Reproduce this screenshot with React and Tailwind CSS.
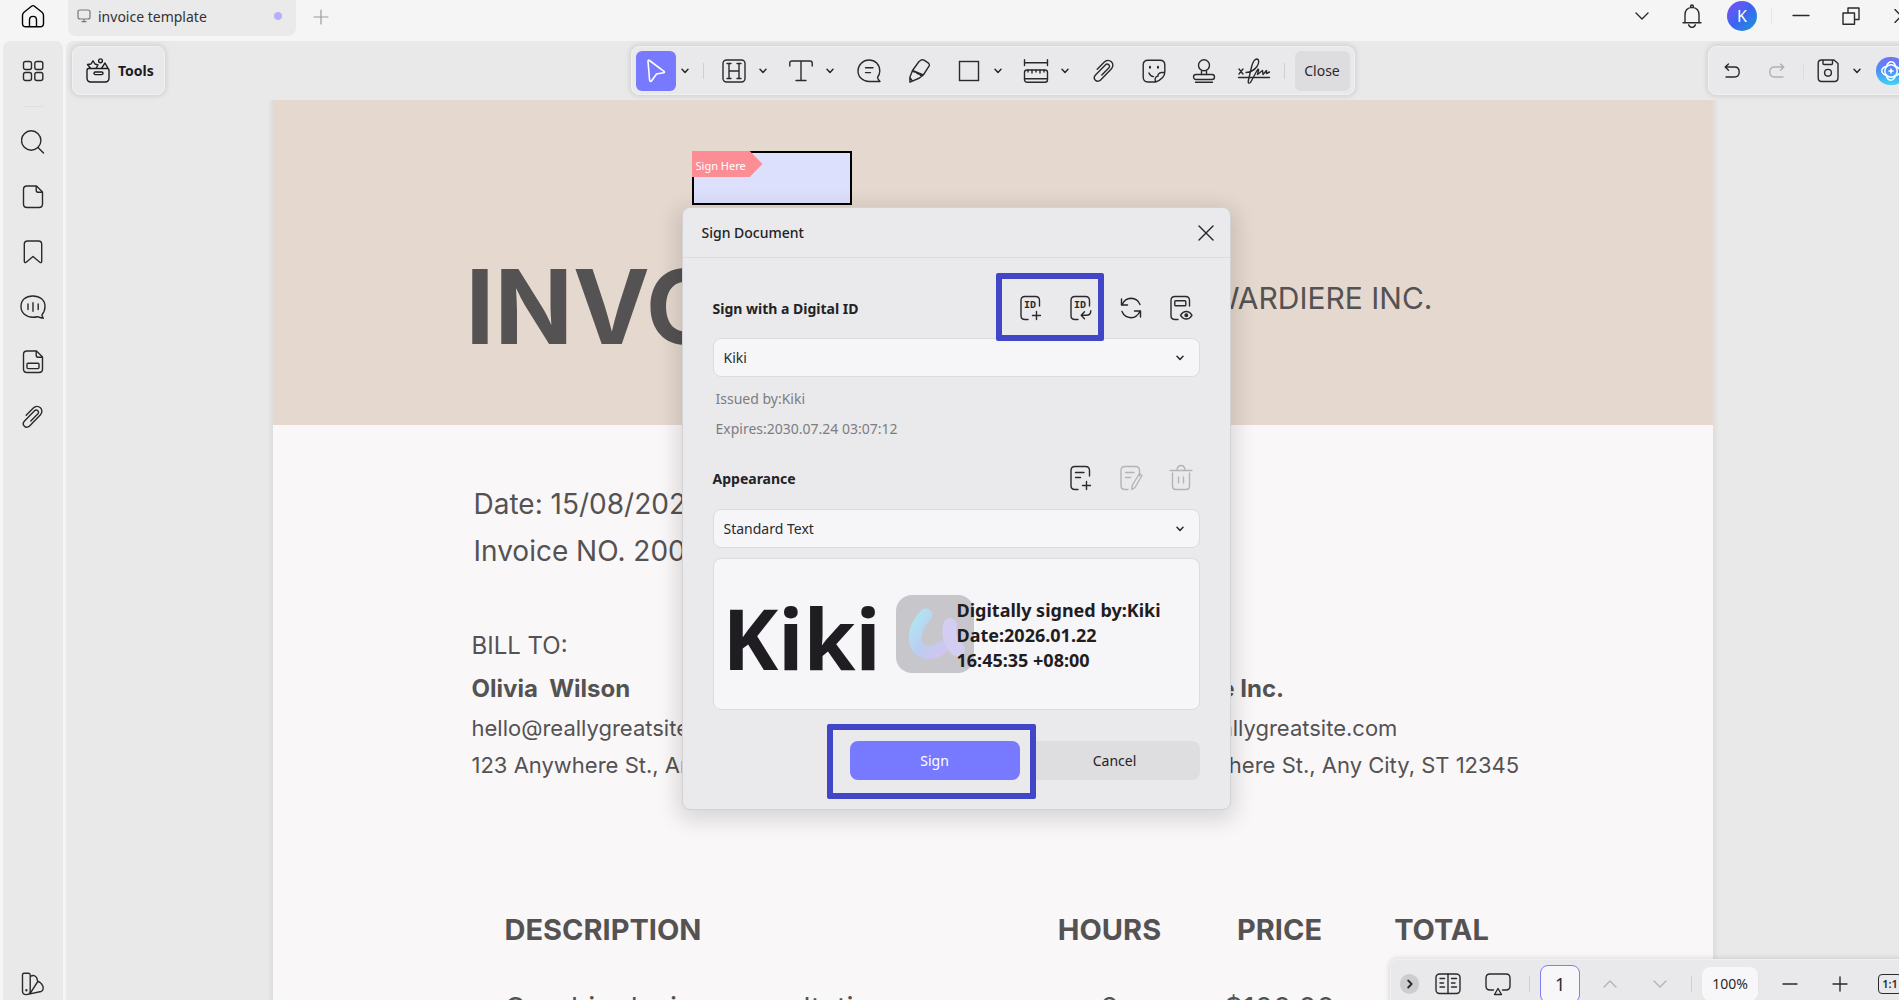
import React from "react";

const ink = "#2a2a2c";

function Icon({ w = 24, h = 24, stroke = 1.4, color = "currentColor", children }) {
  return (
    <svg
      width={w}
      height={h}
      viewBox={`0 0 ${w} ${h}`}
      fill="none"
      stroke={color}
      strokeWidth={stroke}
      strokeLinecap="round"
      strokeLinejoin="round"
      className="shrink-0"
      aria-hidden="true"
    >
      {children}
    </svg>
  );
}

const Chevron = () => (
  <Icon w={8} h={6} stroke={1.5}><path d="M1 1.2 4 4.4 7 1.2" /></Icon>
);

const Paperclip = () => (
  <Icon>
    <path d="M5.2 10.2 12.3 3C14.3 1 17.3 0.9 19.4 2.8 21.3 4.6 21.4 7.7 19.5 9.7L8.6 20.9C7 22.5 4.8 22.6 3.4 21.2 2 19.8 2 17.5 3.5 15.9L13.3 6C14.3 5 15.8 4.9 16.8 5.8 17.7 6.7 17.6 8.1 16.7 9.1L9.8 16" />
  </Icon>
);

const Divider = ({ className }) => <span className={`w-px shrink-0 bg-[#cfcfd2] ${className}`} />;

function Tool({ label, className = "w-[50px]", children }) {
  return (
    <button type="button" aria-label={label} className={`flex h-10 shrink-0 items-center justify-center ${className}`}>
      {children}
    </button>
  );
}

function ToolGroup({ label, children }) {
  return (
    <div className="mr-[5px] ml-1 flex">
      <Tool label={label} className="w-10">{children}</Tool>
      <Tool label={`${label} options`} className="w-[18px]"><Chevron /></Tool>
    </div>
  );
}

function TitleBar() {
  return (
    <header className="flex h-[41px] shrink-0 bg-[#f5f5f6]">
      <button type="button" aria-label="Home" className="flex h-8 w-[66px] items-center justify-center">
        <Icon>
          <path d="M10.5 2.2Q12 1 13.5 2.2L21 8.2Q22.5 9.5 22.5 11.5V19.5Q22.5 22.8 19 22.8H5Q1.5 22.8 1.5 19.5V11.5Q1.5 9.5 3 8.2ZM8.5 22.8V16Q8.5 12.4 12 12.4T15.5 16V22.8" />
        </Icon>
      </button>
      <div className="ml-0.5 flex h-9 w-[228px] items-center rounded-b-lg bg-[#eaeaeb] pr-3.5 pb-1 pl-[9px] text-[14px] text-[#333]">
        <Icon w={14} h={14} stroke={1.2} color="#777"><path d="M3 1h8q2 0 2 2v5q0 2-2 2H3q-2 0-2-2V3q0-2 2-2ZM5 12.6h4M7 10v2.6" /></Icon>
        <span className="ml-[7px] flex-1">invoice template</span>
        <span className="h-2 w-2 rounded-full bg-[#b4b1f9]" />
      </div>
      <button type="button" aria-label="New tab" className="ml-[17px] flex h-[33px] w-4 items-center justify-center text-[#9b9b9d]">
        <Icon w={16} h={16} stroke={1.2}><path d="M8 1v14M1 8h14" /></Icon>
      </button>

      <div className="ml-auto flex h-8 items-center text-[#2a2a2c]">
        <div className="flex items-center gap-3.5">
          <button type="button" aria-label="More" className="flex w-9 justify-center">
            <Icon w={14} h={8}><path d="M1 1 7 7 13 1" /></Icon>
          </button>
          <button type="button" aria-label="Notifications" className="flex w-9 justify-center">
            <Icon w={20} h={24}>
              <path d="M1 18.8H19M3 18.8V11Q3 3.8 10 3.4 17 3.8 17 11V18.8M8.6 3.4V2.4Q8.6 1 10 1T11.4 2.4V3.4M6.6 20.8Q7.4 23.4 10 23.4T13.4 20.8" />
            </Icon>
          </button>
          <button type="button" aria-label="Account" className="flex w-9 justify-center">
            <span className="flex h-[30px] w-[30px] items-center justify-center rounded-full bg-linear-to-br from-[#7a4df5] via-[#3b63f0] to-[#0a96d4] text-[16px] text-white">K</span>
          </button>
        </div>
        <span className="mx-[11px] h-4 w-px bg-[#e6e6e9]" />
        <div className="flex items-center gap-3.5">
          <button type="button" aria-label="Minimize" className="flex w-9 justify-center">
            <Icon w={18} h={18}><path d="M1 8.5H17" /></Icon>
          </button>
          <button type="button" aria-label="Restore" className="flex w-9 justify-center">
            <Icon w={18} h={18}><path d="M1 6H12.5V17.3H1ZM6 6V1H17V12.5H12.5" /></Icon>
          </button>
          <button type="button" aria-label="Close window" className="flex w-9 justify-center">
            <Icon w={14} h={14}><path d="M1 0.5 13 13.5M13 0.5 1 13.5" /></Icon>
          </button>
        </div>
      </div>
    </header>
  );
}

function SideButton({ label, className = "", children }) {
  return (
    <button type="button" aria-label={label} className={`flex h-[55px] w-[60px] items-center justify-center ${className}`}>
      {children}
    </button>
  );
}

function SideBar() {
  return (
    <nav aria-label="Panels" className="ml-[3px] flex w-[60px] shrink-0 flex-col items-center rounded-t-lg bg-[#e9e9ea] text-[#2a2a2c]">
      <SideButton label="Thumbnails" className="mt-0.5">
        <Icon w={22} h={22}>
          <rect x="1.5" y="1.5" width="8" height="8" rx="2" />
          <rect x="12.8" y="1.5" width="8" height="8" rx="2" />
          <rect x="1.5" y="12.5" width="8" height="8" rx="2" />
          <rect x="12.8" y="12.5" width="8" height="8" rx="2" />
        </Icon>
      </SideButton>
      <span className="mt-2 mb-[7px] h-px w-5 bg-[#dedee0]" />
      <SideButton label="Search">
        <Icon><circle cx="10.2" cy="10.5" r="9.7" /><path d="M17 17.5 22.5 23" /></Icon>
      </SideButton>
      <SideButton label="Pages">
        <Icon>
          <path d="M6 1H15.5L21.5 7V19Q21.5 22.5 18 22.5H6Q2.5 22.5 2.5 19V4.5Q2.5 1 6 1ZM15.2 1V5.2Q15.2 7.3 17.3 7.3H21.5" />
        </Icon>
      </SideButton>
      <SideButton label="Bookmarks">
        <Icon><path d="M6.5 1H17.5Q20.7 1 20.7 4.2V21.5Q20.3 23.3 18.8 22.2L12 16.5 5.2 22.2Q3.6 23.3 3.3 21.5V4.2Q3.3 1 6.5 1Z" /></Icon>
      </SideButton>
      <SideButton label="Comments">
        <Icon w={26} h={24}>
          <path d="M22 19.8Q25 16.5 25 11.5C25 5 20 1 12.8 1S1 5 1 11.5 6 22.2 12.8 22.2Q15.5 22.2 17.5 21.7 19.5 22.8 23.3 23.2 22 21.8 22 19.8ZM8 9V14.5M13 7.8V16.2M18.2 9V14.5" />
        </Icon>
      </SideButton>
      <SideButton label="Fields">
        <Icon>
          <path d="M6 1H15.5L21.5 7V19Q21.5 22.5 18 22.5H6Q2.5 22.5 2.5 19V4.5Q2.5 1 6 1ZM15.2 1V5.2Q15.2 7.3 17.3 7.3H21.5" />
          <rect x="6" y="13.2" width="12" height="5.4" rx="1" />
        </Icon>
      </SideButton>
      <SideButton label="Attachments"><Paperclip /></SideButton>
      <SideButton label="Themes" className="mt-auto mb-[9px]">
        <Icon>
          <path d="M3 1.2H7.5Q9.2 1.2 9.2 3V19Q9.2 22.6 5.3 22.6T1.5 19V3Q1.5 1.2 3 1.2ZM9.2 4.5Q13.8 2 15.8 6L16.8 9.5 9 21.6M16.8 9.5Q20 10 22 14.5 22.8 18.5 20 19.5L5.5 22.6" />
          <circle cx="5.4" cy="18.3" r="0.5" />
        </Icon>
      </SideButton>
    </nav>
  );
}

const card = "rounded-lg border border-[#f1f1f3] bg-[#e9e9eb] shadow-[0_0_4px_2px_rgba(0,0,0,0.09)]";

function TopTools() {
  return (
    <div className="grid shrink-0 grid-cols-[1fr_auto_1fr] items-center px-1.5 py-[5px] text-[#2a2a2c]">
      <button type="button" className={`${card} flex h-[49px] w-[93px] items-center gap-2 pl-[13px] text-[14px] font-bold text-[#1d1d1f]`}>
        <Icon w={24} h={25}>
          <path d="M2.5 10.5H21.5Q23 10.5 23 12.5V20Q23 24 19 24H5Q1 24 1 20V12.5Q1 10.5 2.5 10.5ZM4.5 10.3 1.5 6.5 5 6 7 2.8 9 6 12 7 10 10.3M15.5 10.3 19 5 22 10.3" />
          <circle cx="14.5" cy="2.8" r="1.9" />
          <rect x="8" y="14" width="9" height="2.6" rx="1.3" />
        </Icon>
        Tools
      </button>

      <div className={`${card} flex h-[49px] items-center px-1`}>
        <button type="button" aria-label="Select" className="flex h-10 w-10 items-center justify-center rounded-md bg-[#777aff] text-white">
          <Icon w={20} h={24} stroke={1.6}><path d="M2 2.2Q2 0.5 3.5 1.5L18 12.3Q19 13.5 17.5 13.8L10.5 15 5.5 22Q4 23 3.6 21.2Z" /></Icon>
        </button>
        <Tool label="Select options" className="w-[18px]"><Chevron /></Tool>
        <Divider className="mr-1.5 ml-[9px] h-4" />
        <ToolGroup label="Highlight">
          <Icon>
            <rect x="1" y="1" width="22" height="22" rx="3.5" />
            <path d="M7 4.5V19.5M17 4.5V19.5M7 12H17M5 4.5H9M15 4.5H19M5 19.5H9M15 19.5H19" />
          </Icon>
        </ToolGroup>
        <ToolGroup label="Text">
          <Icon><path d="M0.8 7V4Q0.8 2 3 2H21Q23.2 2 23.2 4V7M12 2V21.5M7 21.5H17" /></Icon>
        </ToolGroup>
        <div className="mr-px flex">
          <Tool label="Comment">
            <Icon>
              <path d="M20.5 18.2Q22.8 15.5 22.8 12C22.8 5.5 18 1 12 1S1 5.8 1 12 6 22.5 12 22.5H23Q20.8 20.5 20.5 18.2ZM8.5 8.8H16M8.5 13.6H13.5" />
            </Icon>
          </Tool>
          <Tool label="Marker">
            <Icon>
              <path d="M14 1.2Q15.5 0.3 17 1.2L21.5 4.2Q23 5.5 22 7.2L16.3 16 5.5 11.5 12 2.5ZM5.5 11.5Q6.3 13.5 8.8 13 10 15.5 12.5 15 14 18 16.3 16L12.5 19 3 23.2 2.8 18.5ZM2.8 18.5 5.3 22" />
            </Icon>
          </Tool>
        </div>
        <ToolGroup label="Shapes">
          <Icon><rect x="2.5" y="2.5" width="19" height="19" strokeLinejoin="miter" /></Icon>
        </ToolGroup>
        <ToolGroup label="Measure">
          <Icon w={26} h={24}>
            <path d="M1.5 0.8V6.5M24.5 0.8V6.5M1.5 3.7H24.5M1.5 19.8H24.5M5 11V13M9 11V14M13 11V13M17 11V14M21 11V13" />
            <rect x="1.5" y="11" width="23" height="12.2" rx="2.5" />
          </Icon>
        </ToolGroup>
        <Tool label="Attach"><Paperclip /></Tool>
        <Tool label="Sticker">
          <Icon>
            <path d="M13.5 23H6Q1.2 23 1.2 18V6Q1.2 1.2 6 1.2H18Q22.8 1.2 22.8 6V13Q22.8 19.5 13.5 23ZM13.5 23Q12 18 16 17 15.5 13 22.8 13.2M7 14Q8.5 17.5 11.5 17.6" />
            <path d="M8 7.8v1M16 7.8v1" stroke={ink} strokeWidth="2" />
          </Icon>
        </Tool>
        <Tool label="Stamp">
          <Icon>
            <circle cx="12" cy="6.3" r="5.5" />
            <path d="M9.5 12V15.5M14.5 12V15.5M3.5 23.2H20.5" />
            <rect x="1.5" y="15.5" width="21" height="5" rx="2.5" />
          </Icon>
        </Tool>
        <Tool label="Sign">
          <Icon w={34} h={26}>
            <path d="M1.5 19.5H32.5M2 11 6 16M6 11 2 16" />
            <path d="M9 14.5Q16 14 20 8.5 23.5 2 20 1 16.5 1 14.5 9L11.5 22Q10.5 26.5 13.5 24.5L19.5 13.5Q22 9.5 21.5 12.5L20.5 16.5 25.5 12.5 26 16.5 29.5 12.5V15.5L32.5 14" />
          </Icon>
        </Tool>
        <Divider className="mr-2.5 ml-[5px] h-4" />
        <button type="button" className="flex h-10 w-[55px] items-center justify-center rounded-md bg-[#dddddf] text-[14px]">Close</button>
      </div>

      <div className={`${card} flex h-[49px] w-[205px] items-center justify-self-end pl-[11px]`}>
        <Tool label="Undo" className="w-6"><Icon w={16} h={16}><path d="M4.5 1 1.2 4 4.5 7.2M1.5 4H10.5Q15.2 4 15.2 9T10.5 14H2" /></Icon></Tool>
        <Tool label="Redo" className="ml-[21px] w-6 text-[#b1b1b4]"><Icon w={16} h={16}><path d="M11.5 1 14.8 4 11.5 7.2M14.5 4H5.5Q0.8 4 0.8 9T5.5 14H14" /></Icon></Tool>
        <Divider className="mr-3 ml-3.5 h-4 opacity-50" />
        <Tool label="Save" className="w-6">
          <Icon>
            <path d="M5.5 1H18L22 4.5V18.5Q22 22.5 18.5 22.5H5.5Q2.2 22.5 2.2 18.5V4.5Q2.2 1 5.5 1ZM7 1V4.5Q7 5.5 8 5.5H15.5Q16.5 5.5 16.5 4.5V1" />
            <circle cx="12" cy="13.8" r="3.4" />
          </Icon>
        </Tool>
        <Tool label="Save options" className="ml-2 w-[18px]"><Chevron /></Tool>
        <Tool label="Assistant" className="ml-2.5 w-[30px]">
          <span className="flex h-7 w-[30px] items-center justify-center rounded-full bg-linear-to-b from-[#7270f8] via-[#4a90f7] to-[#3fd4f4]">
            <Icon w={22} h={22} stroke={1.5} color="#fff">
              <circle cx="11" cy="11" r="6.2" />
              <path d="M6.500 6Q9 0.500 13 2.200 15 3.500 15.500 6M16 6.500Q21.500 9 19.800 13 18.500 15 16 15.500M15.500 16Q13 21.500 9 19.800 7 18.500 6.500 16M6 15.500Q0.500 13 2.200 9 3.500 7 6 6.500" />
              <path d="M11 9V13M9 11H13" />
            </Icon>
          </span>
        </Tool>
      </div>
    </div>
  );
}

function Invoice() {
  return (
    <article className="relative mx-auto w-[1440px] bg-[#faf7f9] font-[Inter,sans-serif] text-[#545252] shadow-[0_0_5px_2px_rgba(0,0,0,0.07)]">
      <div className="flex h-[325px] items-start justify-between bg-[#e5d8ce] pt-[155px] pr-[280px] pl-[193px]">
        <h1 className="text-[103px] leading-none font-bold">INVOICE</h1>
        <p className="mt-7 text-[30px] leading-none">WARDIERE INC.</p>
      </div>

      <div className="absolute top-[51px] left-[419px] h-[54px] w-40 border-2 border-black bg-[#dde0fd] font-['Noto_Sans',sans-serif]">
        <span className="-mt-0.5 -ml-0.5 flex h-[26px] w-[71px] items-center bg-[#fd8d95] pt-1 pl-1 text-[11px] text-white [clip-path:polygon(0_0,82%_0,100%_50%,82%_100%,0_100%)]">
          Sign Here
        </span>
      </div>

      <div className="pt-[56px] pl-[201px] text-[28px] leading-[47px]">
        <p>Date: 15/08/2025</p>
        <p>Invoice NO. 2000-15</p>
      </div>

      <div className="grid grid-cols-[657px_1fr] items-end pt-[49px] pl-[199px]">
        <div>
          <p className="text-[24px] leading-[44px]">BILL TO:</p>
          <p className="text-[24px] leading-[42px] font-bold whitespace-pre">Olivia  Wilson</p>
          <p className="text-[22px] leading-[37px]">hello@reallygreatsite.com</p>
          <p className="text-[22px] leading-[37px]">123 Anywhere St., Any City, ST 12345</p>
        </div>
        <div>
          <p className="text-[24px] leading-[42px] font-bold">Wardiere Inc.</p>
          <p className="text-[22px] leading-[37px]">hello@reallygreatsite.com</p>
          <p className="text-[22px] leading-[37px]">123 Anywhere St., Any City, ST 12345</p>
        </div>
      </div>

      <table className="mt-[124px] ml-[232px] w-[1007px] table-fixed text-[29px]">
        <thead>
          <tr className="h-10 font-bold">
            <th className="text-left">DESCRIPTION</th>
            <th className="w-[156px]">HOURS</th>
            <th className="w-[184px]">PRICE</th>
            <th className="w-[140px]">TOTAL</th>
          </tr>
        </thead>
        <tbody>
          <tr className="h-28 text-center">
            <td className="text-left">Graphic design consultation</td>
            <td>2</td>
            <td>$100.00</td>
            <td />
          </tr>
        </tbody>
      </table>
    </article>
  );
}

function DocIcon({ mark, inner, faded }) {
  return (
    <Icon w={24} h={26} stroke={1.4} color={faded ? "#b4b4b7" : ink}>
      <path d="M9 24.5H6Q2 24.5 2 20.5V5.5Q2 1.5 6 1.5H16.5Q20.5 1.5 20.5 5.5V11" />
      {inner}
      {mark}
    </Icon>
  );
}

function IdLabel() {
  return (
    <text x="5" y="12.500" fontSize="10" fontWeight="700" fontFamily="Liberation Mono, monospace" fill={ink} stroke="none">ID</text>
  );
}
const plusMark = <path d="M17.5 16.5V24.5M13.5 20.5H21.5" />;

function DialogIcon({ label, children }) {
  return <button type="button" aria-label={label} className="flex h-8 w-[50px] items-center justify-center">{children}</button>;
}

function Select({ id, value }) {
  return (
    <div className="relative">
      <select
        id={id}
        defaultValue={value}
        className="h-[39px] w-full appearance-none rounded-lg border border-[#dcdcdf] bg-[#f6f6f8] px-2.5 text-[14px] text-[#2a2a2c]"
      >
        <option>{value}</option>
      </select>
      <span className="pointer-events-none absolute top-0 right-4 flex h-full items-center text-[#2a2a2c]"><Chevron /></span>
    </div>
  );
}

function SignDialog() {
  return (
    <div className="pointer-events-none absolute inset-0 flex items-start justify-center pt-[207px] pr-[7px]">
      <section
        role="dialog"
        aria-label="Sign Document"
        className="pointer-events-auto w-[549px] rounded-lg border border-[#d2d2d4] bg-[#eae9eb] text-[14px] text-[#232325] shadow-[0_6px_22px_4px_rgba(0,0,0,0.14)]"
      >
        <header className="flex h-[50px] items-center justify-between border-b border-[#dddde0] pr-4 pl-[19px]">
          <h2 className="font-medium">Sign Document</h2>
          <button type="button" aria-label="Close dialog"><Icon w={16} h={16}><path d="M1 1 15 15M15 1 1 15" /></Icon></button>
        </header>

        <div className="px-[30px] pb-[29px]">
          <div className="flex h-20 items-center justify-between pt-5">
            <label htmlFor="digital-id" className="font-bold">Sign with a Digital ID</label>
            <div className="relative z-10 -mr-1.5 flex">
              <DialogIcon label="Create digital ID"><DocIcon inner={<IdLabel />} mark={plusMark} /></DialogIcon>
              <DialogIcon label="Import digital ID">
                <DocIcon inner={<IdLabel />} mark={<path d="M15.5 16.8 12.2 20.3 15.5 23.8M12.5 20.3H17.5Q21.8 20.3 21.8 15.8" />} />
              </DialogIcon>
              <DialogIcon label="Refresh">
                <Icon w={22} h={24}>
                  <path d="M1.5 3V9H7.5M2 8.8Q5 2.5 11 2.3 17.5 2.6 20 8.5M20.5 21V15H14.5M20 15.2Q17 21.5 11 21.7 4.5 21.4 2 15.5" />
                </Icon>
              </DialogIcon>
              <DialogIcon label="View certificate">
                <DocIcon
                  inner={<rect x="5.8" y="5.8" width="11" height="5" rx="0.8" />}
                  mark={<><path d="M11.5 20.3Q14 16.5 17.3 16.5T23 20.3Q20.600 24 17.3 24T11.500 20.3Z" /><circle cx="17.300" cy="20.300" r="1.300" fill={ink} /></>}
                />
              </DialogIcon>
              <span className="pointer-events-none absolute -top-[19px] -left-2.5 h-[68px] w-[108px] rounded-xs border-6 border-[#4146c9]" />
            </div>
          </div>
          <Select id="digital-id" value="Kiki" />
          <div className="pt-[7px] pl-[3px] leading-[30px] text-[#7d7d80]">
            <p>Issued by:Kiki</p>
            <p>Expires:2030.07.24 03:07:12</p>
          </div>

          <div className="mt-[9px] mb-1.5 flex h-[50px] items-center justify-between">
            <label htmlFor="appearance" className="font-bold">Appearance</label>
            <div className="-mr-1.5 flex">
              <DialogIcon label="Add appearance"><DocIcon inner={<path d="M6.500 7.500H15M6.500 12.500H11.500" />} mark={plusMark} /></DialogIcon>
              <DialogIcon label="Edit appearance">
                <DocIcon faded inner={<path d="M6.500 7.500H15M6.500 12.500H11.500" />} mark={<path d="M20.500 8.500 23 10.500 16 22.500 12.800 24.500 13.200 20.500Z" />} />
              </DialogIcon>
              <DialogIcon label="Delete appearance">
                <Icon w={24} h={28} color="#b4b4b7">
                  <path d="M1 6.500H23M8 6Q8.500 1.500 12 1.500T16 6M3.500 9V22Q3.500 25.500 7 25.500H17Q20.500 25.500 20.500 22V9M9.500 13V19M14.500 13V19" />
                </Icon>
              </DialogIcon>
            </div>
          </div>
          <Select id="appearance" value="Standard Text" />

          <div className="relative mt-2.5 flex h-[152px] items-center rounded-lg border border-[#dcdcdf] bg-[#f6f5f8] pl-[9px] font-bold text-[#1f1d21]">
            <svg className="absolute top-9 left-[182px]" width="78" height="78" viewBox="0 0 78 78" aria-hidden="true">
              <defs>
                <linearGradient id="swoosh" x1="0" y1="0" x2="1" y2="1">
                  <stop offset="0" stopColor="#b0e6f0" />
                  <stop offset="0.500" stopColor="#bccdf0" />
                  <stop offset="1" stopColor="#cfc6ee" />
                </linearGradient>
              </defs>
              <rect width="78" height="78" rx="16" fill="#c6c6cb" />
              <path d="M30 20C22 28 18 38 20 48 23 59 37 61 46 52" fill="none" stroke="url(#swoosh)" strokeWidth="13" strokeLinecap="round" />
              <path d="M54 30C52 40 55 50 62 55" fill="none" stroke="#d3cdf2" strokeWidth="14" strokeLinecap="round" />
            </svg>
            <span className="w-[234px] pt-2 text-[84px] leading-none">Kiki</span>
            <p className="relative w-[210px] pt-0.5 text-[18px] leading-[25px]">Digitally signed by:Kiki Date:2026.01.22 16:45:35 +08:00</p>
          </div>

          <div className="mt-[31px] flex justify-end gap-2.5">
            <div className="relative">
              <button type="button" className="h-[39px] w-[170px] rounded-lg bg-[#777aff] text-white">Sign</button>
              <span className="pointer-events-none absolute -top-[17px] -left-[23px] z-10 h-[75px] w-[209px] rounded-xs border-6 border-[#4146c9]" />
            </div>
            <button type="button" className="h-[39px] w-[170px] rounded-lg bg-[#dedddf]">Cancel</button>
          </div>
        </div>
      </section>
    </div>
  );
}

function PageBar() {
  return (
    <div className={`${card} absolute right-[3px] bottom-3 flex h-[49px] w-[526px] items-center pl-[9px] text-[#2a2a2c]`}>
      <button type="button" aria-label="Collapse" className="flex h-5 w-5 items-center justify-center rounded-full bg-[#cdcdd0]">
        <Icon w={6} h={10} stroke={1.8}><path d="M1.200 1.500 4.600 5 1.200 8.500" /></Icon>
      </button>
      <Tool label="Two-page view" className="ml-1 w-[50px]">
        <Icon w={26} h={22}>
          <rect x="1" y="1" width="24" height="19.500" rx="3.500" />
          <path d="M13 1V20.500M5 5.500H9.500M5 10H8.500M5 14H9.500M16.500 5.500H21.500M16.500 10H20M16.500 14H21.500" />
        </Icon>
      </Tool>
      <Tool label="Present">
        <Icon w={26} h={24}>
          <path d="M8.500 18H5Q1 18 1 14V6Q1 2 5 2H21Q25 2 25 6V14Q25 18 21 18H17.500M13 16.500 16.500 22.500H9.500Z" />
        </Icon>
      </Tool>
      <Divider className="mr-2.5 ml-1.5 h-4" />
      <input aria-label="Page" defaultValue="1" className="h-[38px] w-10 rounded-lg border border-[#7f7df5] bg-[#f7f7fa] text-center text-[18px]" />
      <Tool label="Previous page" className="ml-[5px] w-[50px] text-[#b4b4b7]"><Icon w={14} h={10}><path d="M1 8 7 2 13 8" /></Icon></Tool>
      <Tool label="Next page" className="w-[50px] text-[#b4b4b7]"><Icon w={14} h={10}><path d="M1 2 7 8 13 2" /></Icon></Tool>
      <Divider className="mr-2.5 ml-1.5 h-4" />
      <button type="button" className="h-[34px] w-[58px] rounded-lg bg-[#f7f7f9] text-[14px] shadow-xs">100%</button>
      <Tool label="Zoom out" className="ml-[7px] w-[50px]"><Icon w={16} h={16}><path d="M1 8H15" /></Icon></Tool>
      <Tool label="Zoom in"><Icon w={16} h={16}><path d="M1 8H15M8 1V15" /></Icon></Tool>
      <Tool label="Actual size">
        <span className="flex h-5 w-6 items-center justify-center rounded border-[1.5px] border-current text-[11px] leading-none font-semibold">1:1</span>
      </Tool>
    </div>
  );
}

export default function App() {
  return (
    <div className="h-screen w-full overflow-hidden">
      <div className="relative flex h-[calc(100vh+20px)] w-[calc(100%+20px)] flex-col bg-[#f5f5f6] font-['Noto_Sans',sans-serif]">
        <TitleBar />
        <div className="flex min-h-0 flex-1 gap-[3px]">
          <SideBar />
          <main className="flex min-w-0 flex-1 flex-col overflow-hidden rounded-tl-lg bg-[#e9e9ea]">
            <TopTools />
            <div className="min-h-0 flex-1 overflow-hidden">
              <Invoice />
            </div>
          </main>
        </div>
        <PageBar />
        <SignDialog />
      </div>
    </div>
  );
}
